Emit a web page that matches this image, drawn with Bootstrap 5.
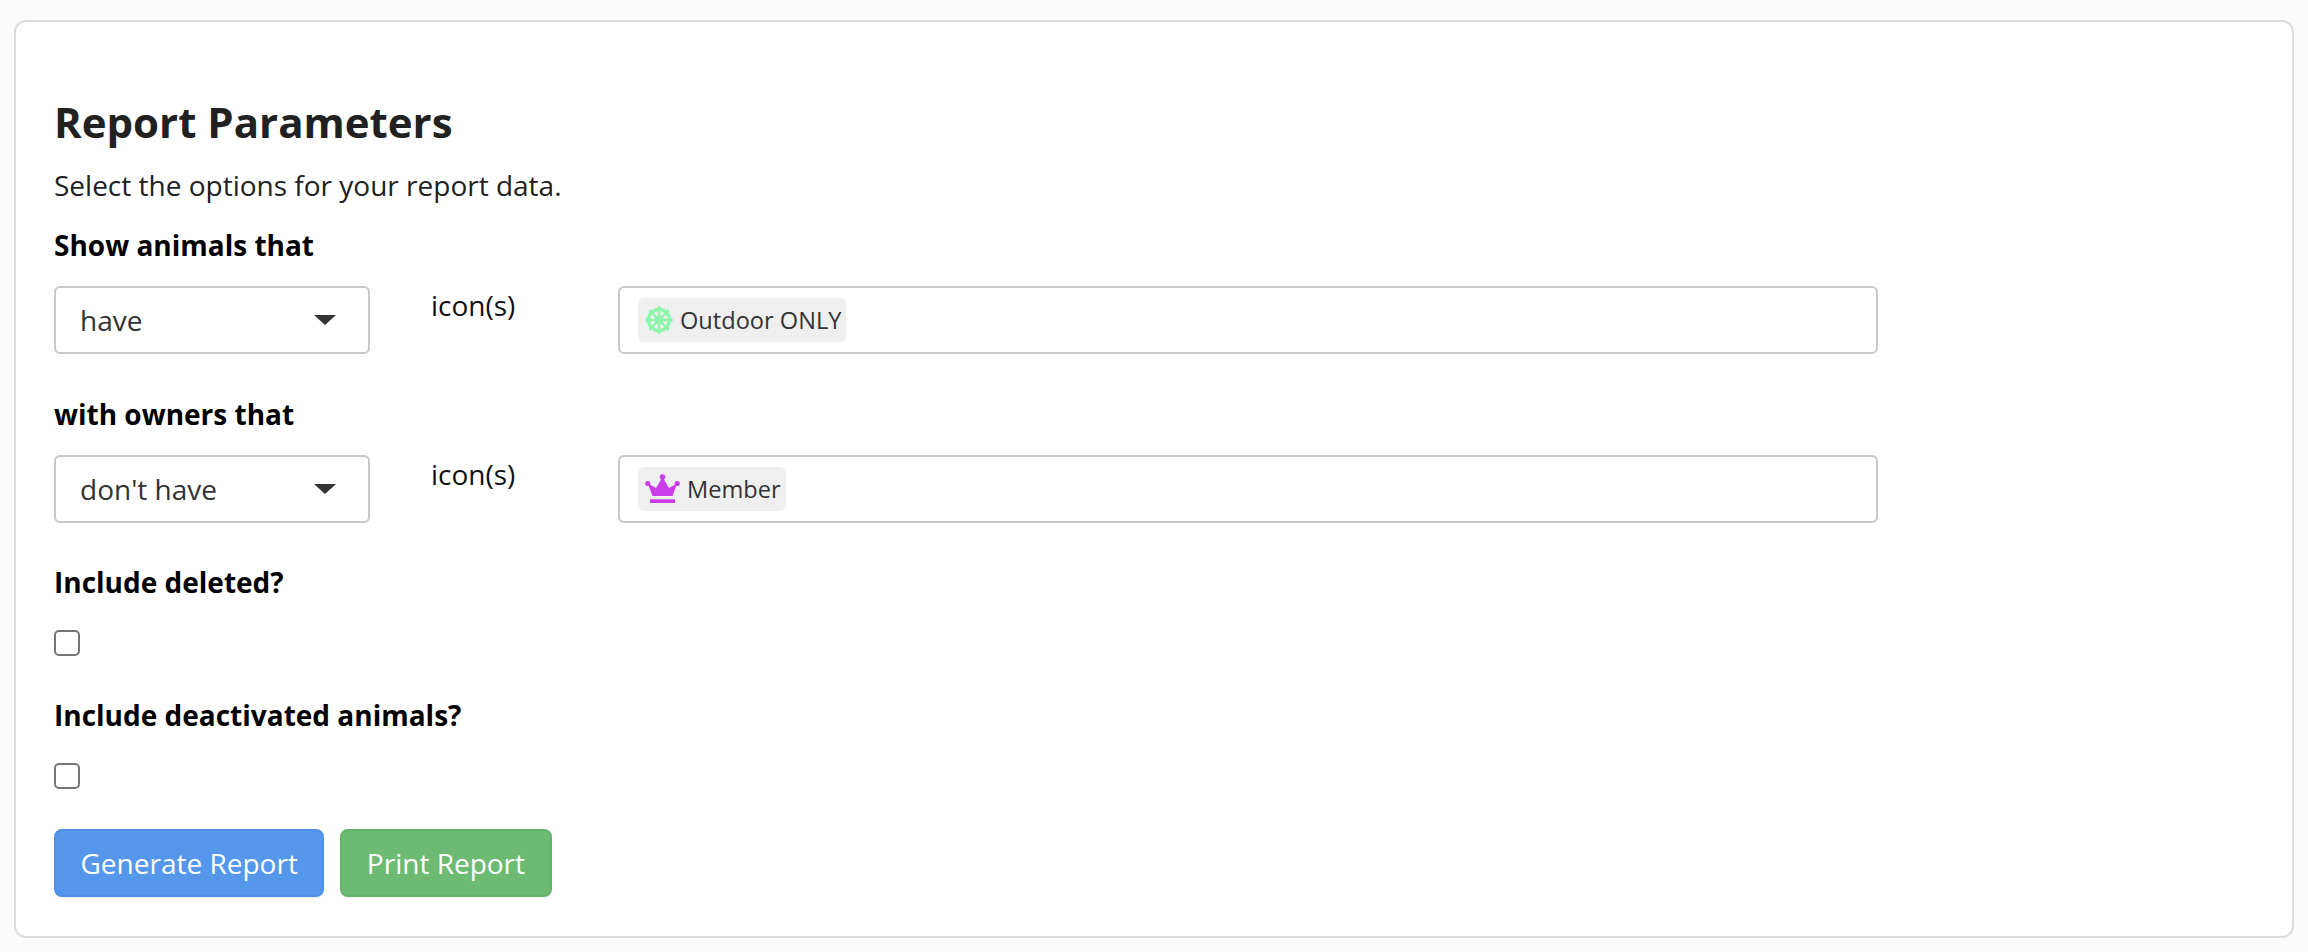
<!DOCTYPE html>
<html lang="en"><head><meta charset="utf-8">
<link href="https://cdn.jsdelivr.net/npm/bootstrap@5.3.0/dist/css/bootstrap.min.css" rel="stylesheet">
<style>
html,body{height:952px;overflow:hidden}
body{background:#fbfbfb;font-family:"Open Sans","Noto Sans",sans-serif;font-size:28px;color:#212121;padding:20px 14px 0}
.panel{height:918px;width:2280px;background:#fff;border:2px solid #dcdcdc;border-radius:12px;padding:76px 38px 0}
.ttl{font-size:42px;font-weight:700;line-height:48px;margin:0 0 19px;color:#212121}
.sub{line-height:40px;margin-bottom:21px}
.lbl{display:block;font-weight:700;color:#000;line-height:40px;margin-bottom:21px;margin-top:-1px}
.frm{margin-bottom:40.5px}
.form-select.selbox{width:316px;height:68px;border:2px solid #c8c8c8;border-radius:6px;padding:0 24px;font-size:28px;color:#333;box-shadow:none;
background-image:url("data:image/svg+xml,%3Csvg xmlns='http://www.w3.org/2000/svg' viewBox='0 0 22 10'%3E%3Cpath fill='%23333' d='M0 0h22L11 10z'/%3E%3C/svg%3E");background-size:22px 10px;background-position:right 32px center}
.icn{width:248px;padding-left:61px;line-height:38px;color:#111}
.tagbox{width:1260px;height:68px;border:2px solid #c8c8c8;border-radius:6px;padding:0 18px}
.chip{background:#efefef;border-radius:6px;height:44px;padding:0 5px 0 7px;font-size:23.6px;gap:7px;color:#333;line-height:46px}
.form-check-input.tick{width:26px;height:26px;border:2px solid #757575;border-radius:5px;margin:28px 0 40px;display:block;float:none}
.acts{gap:16px}
.bt{font-size:28px;height:68px;padding:0 24.5px;color:#fff;border-radius:8px;line-height:1;box-shadow:0 1px 2px rgba(0,0,0,.08)}
.bt-b,.bt-b:hover{background:#5597ea;border:2px solid #4f90e4;color:#fff}
.bt-g,.bt-g:hover{background:#6dbb72;border:2px solid #65b46b;color:#fff}
</style></head><body>
<div class="panel">
<h1 class="ttl">Report Parameters</h1>
<div class="sub">Select the options for your report data.</div>
<label class="lbl">Show animals that</label>
<div class="d-flex frm">
<select class="form-select selbox"><option>have</option></select>
<div class="icn">icon(s)</div>
<div class="tagbox d-flex align-items-center"><span class="chip d-inline-flex align-items-center"><svg width="28" height="28" viewBox="0 0 28 28" fill="none" stroke="#8ff5ab"><circle cx="14" cy="14" r="10.5" stroke-width="3.4"/><circle cx="14" cy="14" r="3.2" stroke-width="2.6"/><path stroke-width="2.4" d="M14 4v20M4 14h20M6.9 6.9l14.2 14.2M21.1 6.9L6.9 21.1"/><path stroke-width="3.4" stroke-linecap="round" d="M14 1.7v.4M14 25.9v.4M1.7 14h.4M25.9 14h.4M5.3 5.3l.3.3M22.4 22.4l.3.3M22.7 5.3l-.3.3M5.6 22.4l-.3.3"/></svg>Outdoor ONLY</span></div>
</div>
<label class="lbl">with owners that</label>
<div class="d-flex frm">
<select class="form-select selbox"><option>don't have</option></select>
<div class="icn">icon(s)</div>
<div class="tagbox d-flex align-items-center"><span class="chip d-inline-flex align-items-center"><svg width="35" height="29" viewBox="0 0 35 29" fill="#cb3de8"><circle cx="17.5" cy="3" r="2.8"/><circle cx="2.8" cy="9.5" r="2.6"/><circle cx="32.2" cy="9.5" r="2.6"/><path d="M17.5 3l6.5 11 8.200-4.500L27.500 22h-20L2.800 9.500 11 14z"/><rect x="5" y="25.300" width="25" height="3.700"/></svg>Member</span></div>
</div>
<label class="lbl">Include deleted?</label>
<input class="form-check-input tick" type="checkbox">
<label class="lbl">Include deactivated animals?</label>
<input class="form-check-input tick" type="checkbox">
<div class="d-flex acts">
<button class="btn bt bt-b">Generate Report</button>
<button class="btn bt bt-g">Print Report</button>
</div>
</div>
</body></html>
